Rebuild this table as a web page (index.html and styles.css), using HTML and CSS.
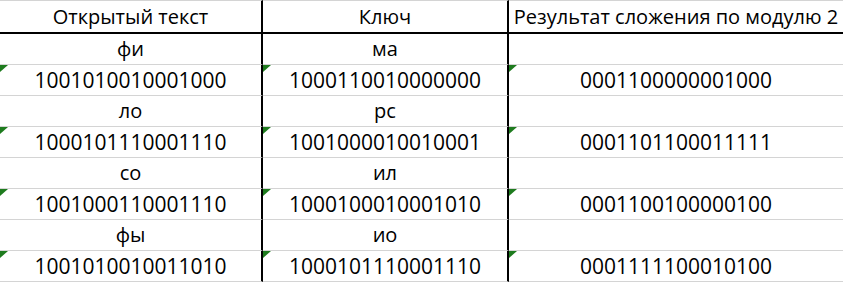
FILE: index.html
```html
<!DOCTYPE html>
<html>
<head>
<meta charset="utf-8">
<link rel="stylesheet" href="styles.css">
</head>
<body>
<div class="sheet">
  <div class="cell head c1">Открытый текст</div>
  <div class="cell head c2">Ключ</div>
  <div class="cell head c3">Результат сложения по модулю 2</div>

  <div class="cell c1">фи</div>
  <div class="cell c2">ма</div>
  <div class="cell c3"></div>
  <div class="cell c1 num"><span class="tri"></span>1001010010001000</div>
  <div class="cell c2 num"><span class="tri"></span>1000110010000000</div>
  <div class="cell c3 num"><span class="tri"></span>0001100000001000</div>

  <div class="cell c1">ло</div>
  <div class="cell c2">рс</div>
  <div class="cell c3"></div>
  <div class="cell c1 num"><span class="tri"></span>1000101110001110</div>
  <div class="cell c2 num"><span class="tri"></span>1001000010010001</div>
  <div class="cell c3 num"><span class="tri"></span>0001101100011111</div>

  <div class="cell c1">со</div>
  <div class="cell c2">ил</div>
  <div class="cell c3"></div>
  <div class="cell c1 num"><span class="tri"></span>1001000110001110</div>
  <div class="cell c2 num"><span class="tri"></span>1000100010001010</div>
  <div class="cell c3 num"><span class="tri"></span>0001100100000100</div>

  <div class="cell c1">фы</div>
  <div class="cell c2">ио</div>
  <div class="cell c3"></div>
  <div class="cell c1 num"><span class="tri"></span>1001010010011010</div>
  <div class="cell c2 num"><span class="tri"></span>1000101110001110</div>
  <div class="cell c3 num"><span class="tri"></span>0001111100010100</div>
</div>
</body>
</html>
```
FILE: styles.css
```css
html, body {
  margin: 0;
  padding: 0;
  background: #ffffff;
}
.sheet {
  display: grid;
  grid-template-columns: 263px 246px 1fr;
  width: 843px;
  font-family: "Open Sans", "Noto Sans", sans-serif;
  font-size: 20px;
  color: #000000;
}
.cell {
  position: relative;
  height: 30px;
  line-height: 30px;
  text-align: center;
  border-bottom: 1px solid #d4d4d4;
  white-space: nowrap;
  overflow: hidden;
}
.c1, .c2 {
  border-right: 2px solid #000000;
}
.head {
  height: 31px;
  line-height: 31px;
  border-top: 1px solid #d4d4d4;
  border-bottom: 2px solid #000000;
}
.num {
  font-size: 21px;
  line-height: 31px;
}
.tri {
  position: absolute;
  left: 0;
  top: 0;
  width: 0;
  height: 0;
  border-top: 7px solid #1e7b1e;
  border-right: 8px solid transparent;
}
```
